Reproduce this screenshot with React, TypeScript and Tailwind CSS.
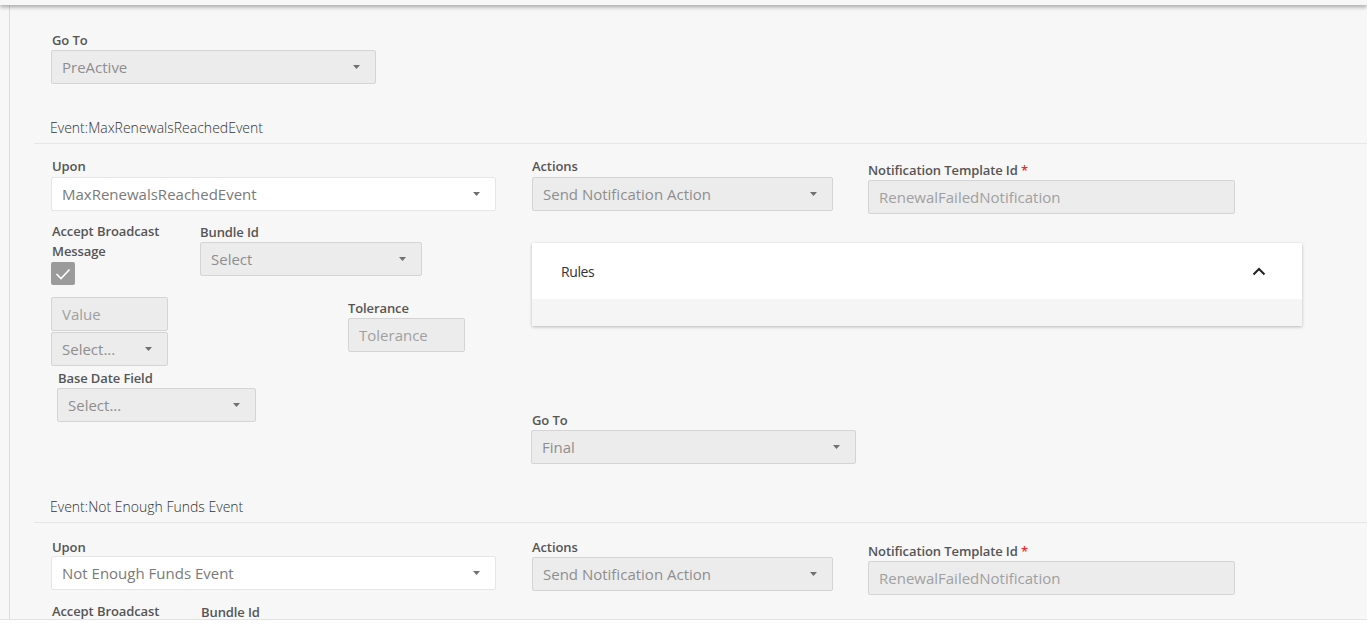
import React from "react";

const Caret = () => (
  <svg width="7" height="4" viewBox="0 0 7 4" className="shrink-0">
    <path d="M0 0 L7 0 L3.5 4 Z" fill="#707070" />
  </svg>
);

const Label = ({ children, className = "" }: { children: React.ReactNode; className?: string }) => (
  <div className={`text-[13px] leading-[16px] font-semibold text-[#555] tracking-[-0.1px] ${className}`}>{children}</div>
);

const Select = ({
  text,
  w,
  white = false,
  className = "",
}: {
  text: string;
  w: string;
  white?: boolean;
  className?: string;
}) => (
  <div
    className={`${w} h-[34px] flex items-center justify-between pl-[10px] pr-[15px] rounded-[2px] border ${
      white ? "bg-white border-[#e6e6e6]" : "bg-[#ececec] border-[#d4d4d4]"
    } ${className}`}
  >
    <span className={`text-[15px] truncate ${white ? "text-[#7a7a7a]" : "text-[#8e8e8e]"}`}>{text}</span>
    <Caret />
  </div>
);

const Input = ({ text, w, className = "" }: { text: string; w: string; className?: string }) => (
  <div
    className={`${w} h-[34px] flex items-center pl-[10px] rounded-[2px] border bg-[#ececec] border-[#d4d4d4] ${className}`}
  >
    <span className="text-[15px] text-[#a0a0a0] truncate">{text}</span>
  </div>
);

const EventHeader = ({ title }: { title: string }) => (
  <div className="ml-[24px] border-b border-[#e6e6e6] pb-[5px]">
    <div className="pl-[16px] text-[14px] leading-[20px] font-light text-[#333]">{title}</div>
  </div>
);

export default function App() {
  return (
    <div className="w-[1367px] h-[636px] bg-white overflow-hidden font-['Open_Sans',sans-serif] flex flex-col">
      <div className="h-[5px] bg-[#f7f7f7] shadow-[0_2px_4px_rgba(0,0,0,0.35)] relative z-10 shrink-0" />
      <div className="h-[615px] flex border-b border-[#e2e2e2] shrink-0 overflow-hidden">
        <div className="w-[10px] bg-[#f7f7f7] border-r border-[#dcdcdc] shrink-0" />
        <div className="flex-1 bg-[#f7f7f7] overflow-hidden">
          {/* Go To */}
          <div className="pl-[41px] pt-[27px]">
            <Label className="ml-[1px]">Go To</Label>
            <Select text="PreActive" w="w-[325px]" className="mt-[2px]" />
          </div>

          {/* Event 1 */}
          <div className="mt-[34px]">
            <EventHeader title="Event:MaxRenewalsReachedEvent" />
            <div className="flex pl-[41px] pt-[14px]">
              {/* left column */}
              <div className="w-[481px] shrink-0">
                <Label className="ml-[1px]">Upon</Label>
                <Select text="MaxRenewalsReachedEvent" w="w-[445px]" white className="mt-[3px]" />
                <div className="flex mt-[12px]">
                  <div className="w-[149px]">
                    <Label className="leading-[20px] -mt-[2px] ml-[1px]">
                      Accept Broadcast
                      <br />
                      Message
                    </Label>
                    <div className="w-[24px] h-[23px] bg-[#9b9b9b] rounded-[2px] flex items-center justify-center mt-[1px]">
                      <svg width="16" height="12" viewBox="0 0 16 12">
                        <path d="M1.5 6 L6 10.5 L14.5 1.5" stroke="white" strokeWidth="1.6" fill="none" />
                      </svg>
                    </div>
                  </div>
                  <div>
                    <Label className="mt-[1px]">Bundle Id</Label>
                    <Select text="Select" w="w-[222px]" className="mt-[2px]" />
                  </div>
                </div>
                <div className="flex mt-[12px]">
                  <div className="w-[297px] shrink-0">
                    <Input text="Value" w="w-[117px]" />
                    <Select text="Select..." w="w-[117px]" className="mt-[1px]" />
                  </div>
                  <div className="pt-[3px]">
                    <Label>Tolerance</Label>
                    <Input text="Tolerance" w="w-[117px]" className="mt-[2px]" />
                  </div>
                </div>
                <div className="ml-[6px] mt-[4px]">
                  <Label className="ml-[1px]">Base Date Field</Label>
                  <Select text="Select..." w="w-[199px]" className="mt-[2px]" />
                </div>
              </div>
              {/* right column */}
              <div>
                <div className="flex">
                  <div className="w-[336px] shrink-0">
                    <Label>Actions</Label>
                    <Select text="Send Notification Action" w="w-[301px]" className="mt-[3px]" />
                  </div>
                  <div className="pt-[4px]">
                    <Label>
                      Notification Template Id <span className="text-[#e03030]">*</span>
                    </Label>
                    <Input text="RenewalFailedNotification" w="w-[367px]" className="mt-[2px]" />
                  </div>
                </div>
                <div className="mt-[29px] w-[770px] h-[83px] bg-white shadow-[0_1px_3px_rgba(0,0,0,0.25)] flex flex-col">
                  <div className="h-[56px] flex items-center justify-between pl-[29px] pr-[36px]">
                    <span className="text-[14px] text-[#333] tracking-[-0.4px]">Rules</span>
                    <svg width="14" height="9" viewBox="0 0 14 9">
                      <path d="M1.5 7.5 L7 2 L12.5 7.5" stroke="#222" strokeWidth="2" fill="none" />
                    </svg>
                  </div>
                  <div className="flex-1 bg-[#f5f5f5]" />
                </div>
                <div className="mt-[86px] -ml-[1px]">
                  <Label className="ml-[1px]">Go To</Label>
                  <Select text="Final" w="w-[325px]" className="mt-[2px]" />
                </div>
              </div>
            </div>
          </div>

          {/* Event 2 */}
          <div className="mt-[33px]">
            <EventHeader title="Event:Not Enough Funds Event" />
            <div className="flex pl-[41px] pt-[16px]">
              <div className="w-[481px] shrink-0">
                <Label className="ml-[1px]">Upon</Label>
                <Select text="Not Enough Funds Event" w="w-[445px]" white className="mt-[1px]" />
                <div className="flex mt-[13px]">
                  <div className="w-[149px] ml-[1px]">
                    <Label>Accept Broadcast</Label>
                  </div>
                  <Label className="mt-[1px]">Bundle Id</Label>
                </div>
              </div>
              <div className="flex">
                <div className="w-[336px] shrink-0">
                  <Label>Actions</Label>
                  <Select text="Send Notification Action" w="w-[301px]" className="mt-[2px]" />
                </div>
                <div className="pt-[4px]">
                  <Label>
                    Notification Template Id <span className="text-[#e03030]">*</span>
                  </Label>
                  <Input text="RenewalFailedNotification" w="w-[367px]" className="mt-[2px]" />
                </div>
              </div>
            </div>
          </div>
        </div>
      </div>
    </div>
  );
}
